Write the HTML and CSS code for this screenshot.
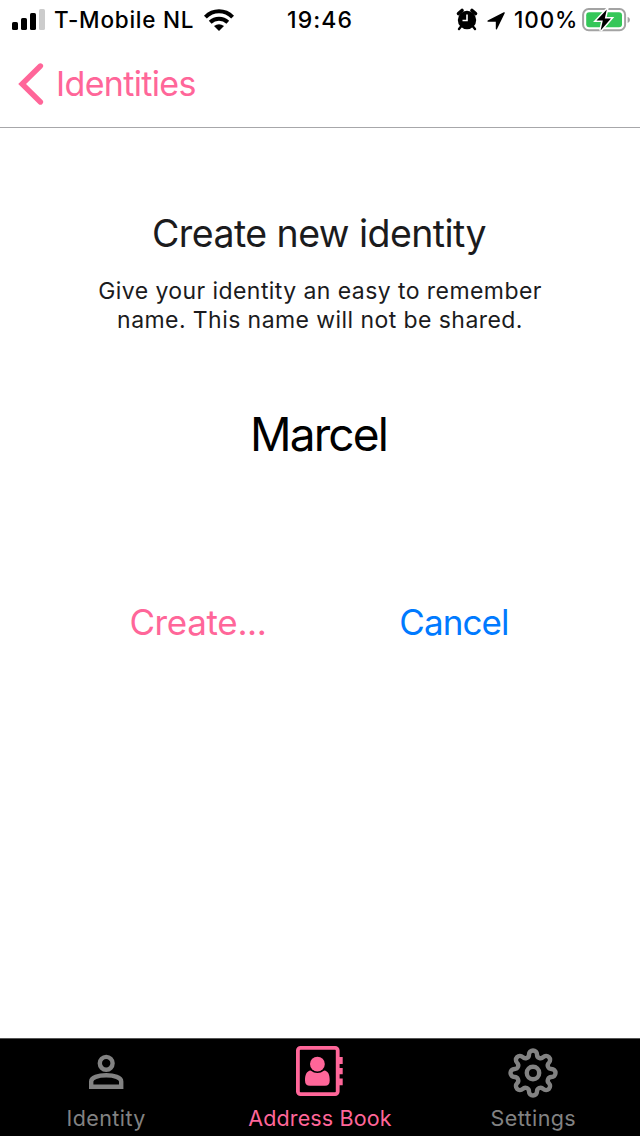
FILE: index.html
```html
<!DOCTYPE html>
<html lang="en">
<head>
<meta charset="utf-8">
<title>Create new identity</title>
<link rel="stylesheet" href="styles.css">
</head>
<body>
<div class="screen">
  <header class="status">
    <svg class="signal" width="34" height="22" viewBox="0 0 34 22"><rect x="0" y="13" width="6" height="8" rx="1.6"/><rect x="9" y="9" width="6" height="12" rx="1.6"/><rect x="18" y="4" width="6" height="17" rx="1.6"/><rect class="signal-off" x="27" y="0" width="6" height="21" rx="1.6"/></svg>
    <span class="carrier">T-Mobile NL</span>
    <svg class="wifi" width="30" height="22" viewBox="0 0 30 22"><path class="wifi-arc" d="M1.4 8.1Q7.2 2.3 15 2.3T28.6 8.1M6.2 13.3Q9.9 9.8 15 9.8T23.8 13.3"/><path d="M10 17Q15 13.4 20 17L15 22Z"/></svg>
    <span class="clock">19:46</span>
    <svg class="alarm" width="20" height="22" viewBox="0 0 20 22"><path class="alarm-bell" d="M1.5 4.5L5 1.5M15 1.5L18.5 4.5"/><circle cx="10" cy="11" r="9.2"/><path class="alarm-leg" d="M4 17.5L2 20M16 17.5L18 20"/><path class="alarm-hand" d="M10 5.5V11.5H5.5"/></svg>
    <svg class="location" width="18" height="18" viewBox="0 0 18 18"><path d="M.7 8.4L16.8.3Q18.2-.1 17.7 1.3L9.9 17.3Q8.9 18 8.8 16.8V9.8H1Q-.3 9.3.7 8.4Z"/></svg>
    <span class="percent">100%</span>
    <svg class="battery" width="48" height="28" viewBox="0 0 48 28"><rect class="battery-case" x="1.1" y="3.1" width="42" height="21.2" rx="5.6"/><path class="battery-tip" d="M45.6 10.8Q48 11.6 48 13.8T45.6 17Z"/><rect class="battery-fill" x="4.2" y="6.2" width="35.8" height="15" rx="3"/><path class="bolt" d="M24.8 3.5L14.5 14.6H20.8L18.6 24.5L29 12.6H22.8Z"/></svg>
  </header>
  <nav class="nav">
    <svg class="chevron" width="26" height="44" viewBox="0 0 26 44"><path d="M23.4 4L5.1 22L23.4 40"/></svg>
    <span class="back">Identities</span>
  </nav>
  <main class="content">
    <h1 class="title">Create new identity</h1>
    <p class="hint">Give your identity an easy to remember<br>name. This name will not be shared.</p>
    <div class="name">Marcel</div>
    <div class="actions"><span class="create">Create...</span><span class="cancel">Cancel</span></div>
  </main>
  <footer class="tabs">
    <div class="tab tab-identity">
      <svg width="52" height="52" viewBox="0.8 0 52 52"><circle class="line" cx="26" cy="18.3" r="6.4"/><path class="line" d="M11 41.8V36.5C11 32.5 18 30.3 26 30.3S41 32.5 41 36.5V41.8Z"/></svg>
      <span class="tab-label label-identity">Identity</span>
    </div>
    <div class="tab tab-book">
      <svg width="52" height="52" viewBox="0 0 52 52"><rect class="line book-line" x="3.9" y="2.9" width="39.8" height="46.3" rx="2.6"/><path class="solid" d="M45 12H48.7V19H45ZM45 23H48.7V29.2H45ZM45 33.6H48.7V40.3H45Z"/><circle class="solid" cx="23.4" cy="19.1" r="7.4"/><path class="solid" d="M16.5 25.4Q23.4 30.4 30.3 25.4C34 25.9 35.7 29 35.7 35.5Q35.7 40.8 31 40.8H16Q11 40.8 11 35.5C11 29 13 25.9 16.5 25.4Z"/></svg>
      <span class="tab-label label-book">Address Book</span>
    </div>
    <div class="tab tab-settings">
      <svg width="52" height="52" viewBox="-26 -28 52 52"><circle class="line" r="6.2"/><path class="line" d="M-4-18.5A4 4 0 0 1 4-18.5A3.6 3.6 0 0 0 10.25-15.91A4 4 0 0 1 15.91-10.25A3.6 3.6 0 0 0 18.5-4A4 4 0 0 1 18.5 4A3.6 3.6 0 0 0 15.91 10.25A4 4 0 0 1 10.25 15.91A3.6 3.6 0 0 0 4 18.5A4 4 0 0 1-4 18.5A3.6 3.6 0 0 0-10.25 15.91A4 4 0 0 1-15.91 10.25A3.6 3.6 0 0 0-18.5 4A4 4 0 0 1-18.5-4A3.6 3.6 0 0 0-15.91-10.25A4 4 0 0 1-10.25-15.91A3.6 3.6 0 0 0-4-18.5Z"/></svg>
      <span class="tab-label label-settings">Settings</span>
    </div>
  </footer>
</div>
</body>
</html>
```
FILE: styles.css
```css
* { box-sizing: border-box; }
body { margin: 0; background: #fff; font-family: Inter, "Liberation Sans", sans-serif; }
svg { display: block; flex: none; overflow: visible; }
.screen { width: 640px; height: 1136px; display: flex; flex-direction: column; white-space: nowrap; }
.status { height: 40px; display: flex; align-items: center; padding-left: 12px; font-size: 22.5px; line-height: 40px; font-weight: 500; color: #000; }
.signal { margin-right: 8px; }
.signal-off { fill: #ccc; }
.carrier { width: 150px; letter-spacing: 0.75px; }
.wifi-arc { fill: none; stroke: #000; stroke-width: 4; }
.clock { width: 170px; margin-left: 53px; font-size: 23px; letter-spacing: 1.1px; }
.alarm-bell { stroke: #000; stroke-width: 3.6; stroke-linecap: round; }
.alarm-leg { stroke: #000; stroke-width: 2.4; stroke-linecap: round; }
.alarm-hand { fill: none; stroke: #fff; stroke-width: 1.6; }
.location { margin: 2px 0 0 10px; }
.percent { width: 67px; margin-left: 9px; letter-spacing: 0.9px; }
.battery { margin-left: 1px; }
.battery-case { fill: none; stroke: #a3a3a3; stroke-width: 2; }
.battery-tip { fill: #a3a3a3; }
.battery-fill { fill: #35c759; }
.bolt { fill: #000; stroke: #fff; stroke-width: 3; paint-order: stroke; }
.nav { height: 88px; display: flex; align-items: center; padding-left: 17px; border-bottom: 1px solid #a7a7aa; color: #ff6699; }
.chevron { fill: none; stroke: #ff6699; stroke-width: 5.4; stroke-linecap: round; }
.back { margin-left: 13px; padding-top: 1px; font-size: 34px; line-height: 44px; letter-spacing: -0.65px; }
.content { flex: 1; display: flex; flex-direction: column; align-items: center; padding-top: 81px; text-align: center; color: #1b1b1d; }
.title { margin: 0; padding-right: 2px; font-size: 37.5px; line-height: 50px; font-weight: 400; letter-spacing: -0.55px; }
.hint { margin: 18px 0 0; font-size: 23px; line-height: 29px; letter-spacing: 0.43px; }
.name { margin-top: 69px; padding-right: 3px; font-size: 46px; line-height: 60px; letter-spacing: -1.9px; color: #000; }
.actions { display: grid; grid-template-columns: 256px 256px; margin-top: 133px; padding-left: 12px; font-size: 35px; line-height: 50px; }
.create { color: #ff6699; letter-spacing: -0.35px; }
.cancel { color: #007aff; letter-spacing: -0.9px; }
.tabs { height: 98px; display: grid; grid-template-columns: repeat(3, 1fr); background: #000; border-top: 1px solid #555; }
.tab { display: flex; flex-direction: column; align-items: center; padding-top: 6px; color: #828282; }
.tab-book { color: #ff6699; }
.line { fill: none; stroke: currentColor; stroke-width: 4.4; }
.book-line { stroke-width: 3.8; }
.solid { fill: currentColor; }
.tab-label { margin-top: 6px; font-size: 21.5px; line-height: 30px; letter-spacing: 0.4px; }
.label-identity { padding-right: 1px; }
.label-book { letter-spacing: 0.15px; }
```
